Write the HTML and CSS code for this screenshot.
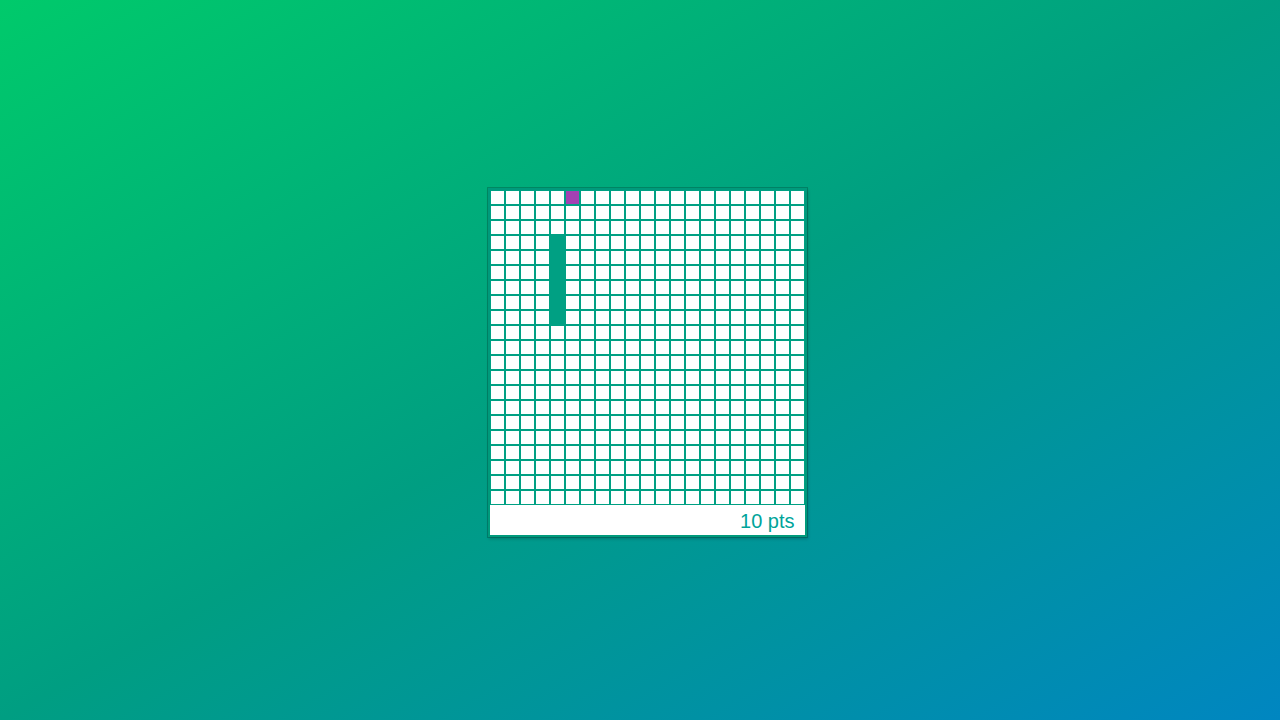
FILE: index.html
```html
<!DOCTYPE html>
<html lang="en">
<head>
<meta charset="utf-8">
<title>Snake</title>
<link rel="stylesheet" href="styles.css">
</head>
<body>
<main class="stage">
  <section class="board">
    <div class="grid" id="grid"></div>
    <div class="score">10 pts</div>
  </section>
</main>
<script src="script.js"></script>
</body>
</html>
```

FILE: styles.css
```css
html, body {
  margin: 0;
  height: 100%;
}
body {
  background: linear-gradient(to bottom right, #00ca6b 0%, #009e82 50%, #0086c1 100%);
  font-family: "Liberation Sans", Arial, sans-serif;
}
.stage {
  height: 100%;
  display: flex;
  align-items: center;
  justify-content: center;
}
.board {
  margin: 5px 0 0 14px;
  border: 2px solid #009a7c;
  box-shadow: 0 0 0 1px rgba(0, 70, 55, 0.35), 1px 2px 3px rgba(0, 0, 0, 0.2);
  background: #fff;
}
.grid {
  display: grid;
  grid-template-columns: repeat(21, 15px);
  grid-auto-rows: 15px;
}
.cell {
  box-sizing: border-box;
  border: 1px solid #00a083;
  background: #fff;
}
.cell.snake {
  background: #00a083;
}
.cell.food {
  background: #a341b3;
}
.score {
  height: 30px;
  line-height: 32px;
  text-align: right;
  padding-right: 10px;
  font-size: 20px;
  color: #00a49a;
}
```

FILE: script.js
```js
var grid = document.getElementById('grid');
for (var r = 0; r < 21; r++) {
  for (var c = 0; c < 21; c++) {
    var d = document.createElement('div');
    d.className = 'cell';
    if (c === 4 && r >= 3 && r <= 8) d.className += ' snake';
    if (c === 5 && r === 0) d.className += ' food';
    grid.appendChild(d);
  }
}
```
